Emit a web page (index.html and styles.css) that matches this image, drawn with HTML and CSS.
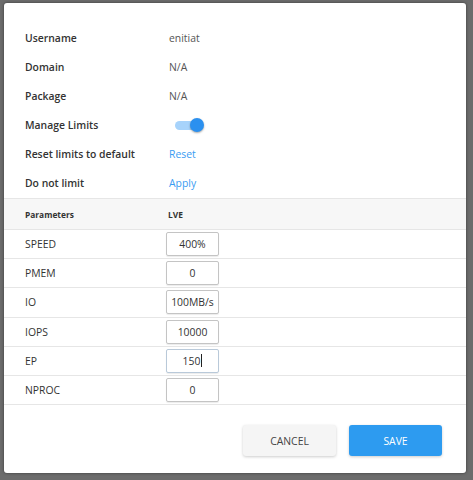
FILE: index.html
```html
<!DOCTYPE html>
<html>
<head>
<meta charset="utf-8">
<link rel="stylesheet" href="styles.css">
</head>
<body>
<div class="dialog">
  <div class="info">
    <div class="info-row"><span class="label">Username</span><span class="value">enitiat</span></div>
    <div class="info-row"><span class="label">Domain</span><span class="value">N/A</span></div>
    <div class="info-row"><span class="label">Package</span><span class="value">N/A</span></div>
    <div class="info-row"><span class="label">Manage Limits</span><span class="value"><span class="toggle"><span class="track"></span><span class="knob"></span></span></span></div>
    <div class="info-row"><span class="label">Reset limits to default</span><span class="value link">Reset</span></div>
    <div class="info-row"><span class="label">Do not limit</span><span class="value link">Apply</span></div>
  </div>
  <div class="table">
    <div class="thead"><span class="th-param">Parameters</span><span class="th-lve">LVE</span></div>
    <div class="trow"><span class="param">SPEED</span><span class="input">400%</span></div>
    <div class="trow"><span class="param">PMEM</span><span class="input">0</span></div>
    <div class="trow"><span class="param">IO</span><span class="input">100MB/s</span></div>
    <div class="trow"><span class="param">IOPS</span><span class="input">10000</span></div>
    <div class="trow"><span class="param">EP</span><span class="input focus">150<span class="caret"></span></span></div>
    <div class="trow"><span class="param">NPROC</span><span class="input">0</span></div>
  </div>
  <div class="actions">
    <button class="btn cancel">CANCEL</button>
    <button class="btn save">SAVE</button>
  </div>
</div>
</body>
</html>
```
FILE: styles.css
```css
html, body {
  margin: 0;
  padding: 0;
}
body {
  width: 473px;
  height: 480px;
  background: #6c6c6c;
  font-family: "Open Sans", "Noto Sans", sans-serif;
  overflow: hidden;
  padding-top: 3px;
  box-sizing: border-box;
}
.dialog {
  margin-left: 4px;
  width: 462px;
  height: 470px;
  background: #fff;
  border-radius: 3px;
  box-shadow: 0 0 3px rgba(0,0,0,0.5);
  display: flex;
  flex-direction: column;
}
.info {
  padding-top: 20px;
  padding-bottom: 1px;
}
.info-row {
  height: 29px;
  display: flex;
  align-items: center;
  font-size: 10.4px;
}
.label {
  width: 144px;
  padding-left: 21px;
  font-weight: 600;
  color: #333;
}
.value {
  color: #555;
  display: flex;
  align-items: center;
}
.link {
  color: #3a9cf2;
}
.toggle {
  position: relative;
  width: 30px;
  height: 14px;
  margin-left: 6px;
  display: block;
}
.track {
  position: absolute;
  left: 0;
  top: 3px;
  width: 26px;
  height: 9px;
  border-radius: 5px;
  background: #a7d3fb;
}
.knob {
  position: absolute;
  left: 15px;
  top: 0;
  width: 14px;
  height: 14px;
  border-radius: 50%;
  background: #2b90ef;
  box-shadow: 0 1px 2px rgba(0,0,0,0.35);
}
.table {
  border-top: 1px solid #e6e6e6;
}
.thead {
  height: 30px;
  background: #f7f7f7;
  border-bottom: 1px solid #e6e6e6;
  display: flex;
  align-items: center;
  font-size: 8.4px;
  font-weight: 700;
  color: #333;
}
.th-param {
  width: 143px;
  padding-left: 21px;
}
.trow {
  height: 28.2px;
  border-bottom: 1px solid #e6e6e6;
  display: flex;
  align-items: center;
  font-size: 10.4px;
  color: #333;
}
.param {
  width: 141px;
  padding-left: 21px;
}
.input {
  width: 51px;
  height: 22px;
  border: 1px solid #c4c4c4;
  border-radius: 2px;
  box-shadow: 0 1px 1px rgba(0,0,0,0.08);
  display: flex;
  align-items: center;
  justify-content: center;
  font-size: 10.4px;
  color: #333;
}
.input.focus {
  border-color: #b9c9d9;
}
.caret {
  display: inline-block;
  width: 1px;
  height: 13px;
  background: #222;
  margin-left: 1px;
}
.actions {
  display: flex;
  justify-content: flex-end;
  gap: 13px;
  padding: 20px 24px 0 0;
}
.btn {
  width: 93px;
  height: 31px;
  border: none;
  border-radius: 3px;
  font-family: "Open Sans", "Noto Sans", sans-serif;
  font-size: 10.4px;
  padding: 0;
}
.cancel {
  background: #f5f5f5;
  color: #444;
  box-shadow: 0 1px 3px rgba(0,0,0,0.2);
}
.save {
  background: #2d9bf0;
  color: #fff;
  box-shadow: 0 1px 3px rgba(0,0,0,0.2);
}
```
